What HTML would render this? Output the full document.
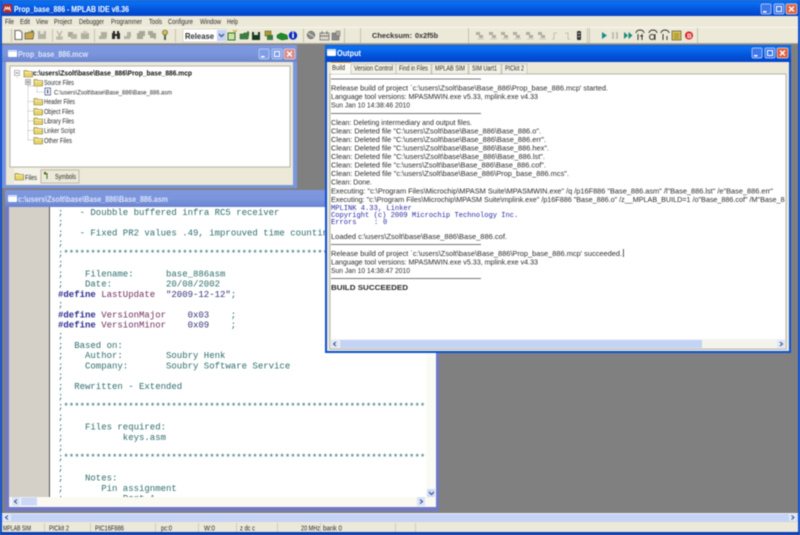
<!DOCTYPE html>
<html><head><meta charset="utf-8"><title>Prop_base_886 - MPLAB IDE v8.36</title>
<style>
html,body{margin:0;padding:0;background:#808080;overflow:hidden}
svg{display:block;filter:blur(.4px)}
.s{font-family:"Liberation Sans",sans-serif;font-size:7.5px;fill:#2c2c2c}
.m{font-family:"Liberation Mono",monospace;font-size:9px;fill:#2f6c6c}
.d{fill:#2b2b90;font-weight:bold}
.p{fill:#70305f}
.q{fill:#33337a}
.l{font-family:"Liberation Mono",monospace;font-size:7.1px;fill:#2a2aa5}
.t{font-family:"Liberation Sans",sans-serif;font-weight:bold;font-size:8px;fill:#fff}
</style></head><body>
<svg xmlns="http://www.w3.org/2000/svg" width="800" height="535" viewBox="0 0 800 535">
<defs>
<linearGradient id="act" x1="0" y1="0" x2="0" y2="1"><stop offset="0" stop-color="#0b62e6"/><stop offset=".15" stop-color="#0a70f2"/><stop offset=".6" stop-color="#0454dc"/><stop offset="1" stop-color="#0345c8"/></linearGradient>
<linearGradient id="ina" x1="0" y1="0" x2="0" y2="1"><stop offset="0" stop-color="#7d97e0"/><stop offset=".5" stop-color="#7c96de"/><stop offset="1" stop-color="#6c84cf"/></linearGradient>
<g id="bb"><rect x="0" y="0" width="10" height="10" rx="1.5" fill="#3d77ea" stroke="#d0dcf8" stroke-width=".7"/><rect x="2" y="7" width="3.5" height="1.5" fill="#fff"/></g>
<g id="bm"><rect x="0" y="0" width="10" height="10" rx="1.5" fill="#3d77ea" stroke="#d0dcf8" stroke-width=".7"/><rect x="2.5" y="2.5" width="5" height="5" fill="none" stroke="#fff"/></g>
<g id="bx"><rect x="0" y="0" width="11" height="10" rx="1.5" fill="#e0603c" stroke="#f4d8d0" stroke-width=".7"/><path d="M3 2.5L8 7.5M8 2.5L3 7.5" stroke="#fff" stroke-width="1.4"/></g>
<g id="bmi"><rect x="0" y="0" width="10" height="10" rx="1.5" fill="#7f9ee8" stroke="#c8d4f0" stroke-width=".7"/><rect x="2" y="7" width="3.5" height="1.5" fill="#fff"/></g>
<g id="bma"><rect x="0" y="0" width="10" height="10" rx="1.5" fill="#7f9ee8" stroke="#c8d4f0" stroke-width=".7"/><rect x="2.5" y="2.5" width="5" height="5" fill="none" stroke="#fff"/></g>
<g id="bxi"><rect x="0" y="0" width="11" height="10" rx="1.5" fill="#d98a8a" stroke="#ecd8d8" stroke-width=".7"/><path d="M3 2.5L8 7.5M8 2.5L3 7.5" stroke="#fff" stroke-width="1.4"/></g>
<g id="win"><rect x="0" y="0" width="9" height="7" rx="1" fill="#fff"/><rect x="0" y="0" width="9" height="2" fill="#cfdcf5"/></g>
<g id="fo"><path d="M0 1.5h3l1 1h4.500v5.500h-8.500z" fill="#e6d468" stroke="#7a7030" stroke-width=".6"/><rect x=".5" y="3" width="7.500" height="1" fill="#fbf3b8"/></g>
<g id="dis"><path d="M0 0h4v3h-4zM3 3h4v3h-4z" fill="#b0ae9f"/><rect x="1" y="6.5" width="7" height="1" fill="#cdcbbc"/></g>
<clipPath id="ed"><rect x="50" y="207" width="376" height="290"/></clipPath>
<clipPath id="ou"><rect x="330" y="75" width="455" height="264"/></clipPath>
</defs>

<rect width="800" height="535" fill="#808080"/>
<!-- main frame -->
<rect x="0" y="0" width="800" height="16" fill="url(#act)"/>
<rect x="0" y="0" width="2" height="535" fill="#0a50d8"/>
<rect x="798" y="0" width="2" height="535" fill="#0a50d8"/>
<rect x="0" y="532" width="800" height="3" fill="#0a3fb8"/>
<rect x="3" y="4" width="9" height="9" fill="#b02828"/><path d="M4 11l1.500-4 1 2.500 1-2.500 1 2.500 1-2.500 1 4" stroke="#fff" fill="none" stroke-width=".8"/>
<text class="t" x="14" y="12" textLength="115" lengthAdjust="spacingAndGlyphs" style="font-size:8.500px">Prop_base_886 - MPLAB IDE v8.36</text>
<use href="#bb" x="761" y="4"/><use href="#bm" x="774" y="4"/><use href="#bx" x="786" y="4"/>

<rect x="2" y="16" width="796" height="28" fill="#ece9d8"/>
<rect x="2" y="27" width="796" height="1" fill="#f8f6ea"/>
<rect x="2" y="43" width="796" height="1" fill="#aca899"/>
<g class="s">
<text x="5" y="24" textLength="9" lengthAdjust="spacingAndGlyphs">File</text>
<text x="20" y="24" textLength="10" lengthAdjust="spacingAndGlyphs">Edit</text>
<text x="36" y="24" textLength="12" lengthAdjust="spacingAndGlyphs">View</text>
<text x="54" y="24" textLength="18" lengthAdjust="spacingAndGlyphs">Project</text>
<text x="79" y="24" textLength="25" lengthAdjust="spacingAndGlyphs">Debugger</text>
<text x="111" y="24" textLength="31" lengthAdjust="spacingAndGlyphs">Programmer</text>
<text x="149" y="24" textLength="13" lengthAdjust="spacingAndGlyphs">Tools</text>
<text x="168" y="24" textLength="25" lengthAdjust="spacingAndGlyphs">Configure</text>
<text x="200" y="24" textLength="21" lengthAdjust="spacingAndGlyphs">Window</text>
<text x="227" y="24" textLength="11" lengthAdjust="spacingAndGlyphs">Help</text>
</g>
<!-- toolbar separators -->
<g fill="#c4c1b0">
<rect x="11" y="29" width="1" height="13"/><rect x="52" y="29" width="1" height="13"/><rect x="94" y="29" width="1" height="13"/><rect x="175" y="29" width="1" height="13"/><rect x="303" y="29" width="1" height="13"/><rect x="344" y="28" width="1" height="15"/><rect x="360" y="28" width="1" height="15"/><rect x="468" y="28" width="1" height="15"/><rect x="587" y="28" width="1" height="15"/><rect x="589" y="28" width="1" height="15"/><rect x="697" y="28" width="1" height="15"/>
</g>
<!-- toolbar icons group 1 -->
<path d="M15 30.500h5l2 2v7h-7z" fill="#fff" stroke="#444" stroke-width=".8"/>
<path d="M25 33h3l1-1h4l1 1-1 6h-8z" fill="#c8a848" stroke="#555" stroke-width=".7"/><path d="M31 30l3 1-2 2z" fill="#3a7a3a"/>
<rect x="38" y="31" width="8" height="8" fill="#b4b2a4"/><rect x="40" y="31" width="4" height="3" fill="#e4e2d4"/>
<path d="M57 31l3 5M62 31l-3 5" stroke="#aaa89a" stroke-width="1"/><circle cx="58" cy="38" r="1.300" fill="none" stroke="#aaa89a"/><circle cx="61" cy="38" r="1.300" fill="none" stroke="#aaa89a"/>
<rect x="68" y="32" width="5" height="5" fill="#a8a698"/><rect x="71" y="34" width="6" height="5" fill="#b8b6a8"/>
<rect x="81" y="33" width="8" height="6" fill="#b0ae9f"/><rect x="83" y="31" width="4" height="3" fill="#c8c6b8"/>
<path d="M99 36h8l-1 3h-7zM101 32h6v4h-6z" fill="#b0ae9f"/>
<path d="M112 33h3v6h-3zM117 33h3v6h-3zM113 31h2v2h-2zM117 31h2v2h-2zM115 34h2v2h-2z" fill="#2a2a2a"/>
<path d="M124 36h6v3h-6zM127 32h4v5h-4z" fill="#b4b2a4"/>
<path d="M137 33h6v6h-6zM139 31h6v5h-6z" fill="#a8a698"/>
<path d="M150 33h6v5h-6zM148 31h5v4h-5zM154 37h2v2h-2z" fill="#a8a698"/>
<circle cx="165" cy="32.500" r="2.500" fill="#d8c040" stroke="#555" stroke-width=".6"/><rect x="164" y="35" width="2" height="5" fill="#4a6a4a"/>
<!-- release combo -->
<rect x="183" y="29" width="43" height="13" fill="#fff" stroke="#c9c7b8" stroke-width=".6"/>
<text x="185" y="39" style="font:bold 8.500px 'Liberation Sans',sans-serif;fill:#333" textLength="29" lengthAdjust="spacingAndGlyphs">Release</text>
<rect x="217" y="30" width="8.500" height="11" fill="#c4d3f4"/><path d="M219 34l2.500 2.500 2.500-2.500" stroke="#304880" fill="none" stroke-width="1.200"/>
<!-- colored icons -->
<rect x="228" y="33" width="7" height="7" fill="#cfe0a0" stroke="#2a7030"/><path d="M233 30l2 2 2-2" stroke="#c8a820" fill="none"/>
<path d="M240 34h3l1-1h3l1-2 1 2-1 6h-8z" fill="#3a8040" stroke="#245028" stroke-width=".5"/>
<rect x="252" y="32" width="8" height="8" fill="#1a3a20"/><rect x="254" y="32" width="4" height="3" fill="#d8e4d0"/>
<rect x="265" y="31" width="6" height="5" fill="#b49830" stroke="#445018" stroke-width=".5"/><rect x="267" y="35" width="6" height="5" fill="#3a7a40"/>
<path d="M277 35l4-2 6 2 1 4-6 1-5-2z" fill="#1e8a2c" stroke="#185a20" stroke-width=".5"/>
<circle cx="293" cy="35.500" r="4.200" fill="#0a2cc0"/><rect x="292.200" y="33.500" width="1.600" height="4.500" fill="#fff"/><rect x="292.200" y="31.700" width="1.600" height="1.200" fill="#fff"/>
<circle cx="311" cy="35" r="3.800" fill="#8a8a88" stroke="#444" stroke-width=".5"/><path d="M308 33l6 4" stroke="#ddd" stroke-width=".8"/>
<rect x="320" y="33" width="9" height="7" fill="#d8d6c8" stroke="#555" stroke-width=".6"/><path d="M322 31v3M327 31v3M320 36h9" stroke="#555" stroke-width=".7"/>
<rect x="332" y="33" width="7" height="7" fill="#8a8a88" stroke="#555" stroke-width=".5"/><rect x="336" y="31" width="4" height="5" fill="#b0aea0" stroke="#555" stroke-width=".4"/>
<!-- checksum -->
<text x="372" y="38" style="font:bold 7.500px 'Liberation Sans',sans-serif;fill:#333" textLength="40" lengthAdjust="spacingAndGlyphs">Checksum:</text>
<text x="415" y="38" style="font:bold 7.500px 'Liberation Sans',sans-serif;fill:#333" textLength="23" lengthAdjust="spacingAndGlyphs">0x2f5b</text>
<!-- disabled group -->
<use href="#dis" x="476" y="32"/><use href="#dis" x="489" y="32"/><use href="#dis" x="501" y="32"/><use href="#dis" x="513" y="32"/><use href="#dis" x="526" y="32"/><use href="#dis" x="538" y="32"/>
<path d="M552 39h2v-6h3M565 33h3v6h2" stroke="#c4c2b4" fill="none"/>
<rect x="577" y="31" width="4" height="9" rx="1" fill="#333"/><rect x="578" y="33" width="2" height="1" fill="#ccc"/><rect x="578" y="36" width="2" height="1" fill="#ccc"/>
<!-- debug group -->
<path d="M602 32l5 3.500-5 3.500z" fill="#1a8a8a"/>
<rect x="612" y="32" width="2" height="7" fill="#bebcae"/><rect x="616" y="32" width="2" height="7" fill="#bebcae"/>
<path d="M624 32l4 3.500-4 3.500zM628.500 32l4 3.500-4 3.500z" fill="#1a8a7a"/>
<path d="M636 33a4 3 0 0 1 8 0" stroke="#333" fill="none"/><path d="M638 40v-6M642 40v-6M640 36h3" stroke="#333" fill="none"/>
<path d="M649 33a4 3 0 0 1 8 0" stroke="#333" fill="none"/><circle cx="652" cy="37" r="2.500" fill="none" stroke="#333"/><path d="M655 34v6" stroke="#333"/>
<path d="M661 33a4 3 0 0 1 8 0" stroke="#333" fill="none"/><path d="M663 34v6M667 36v4" stroke="#333" fill="none"/>
<rect x="672" y="31" width="9" height="9" fill="#d8c040" stroke="#444" stroke-width=".6"/><path d="M674 34h5M674 36h5M674 38h5" stroke="#555" stroke-width=".6"/>
<circle cx="689" cy="35.500" r="4" fill="#d82020"/><text x="687" y="38" style="font:bold 6.500px 'Liberation Sans',sans-serif;fill:#fff">B</text>

<!-- MDI horizontal scrollbar -->
<rect x="2" y="513" width="796" height="9" fill="#c5d4f6"/>
<rect x="2" y="513" width="796" height="1" fill="#e8ecf8"/>
<rect x="3" y="514" width="8" height="7" fill="#dfe6f8"/><path d="M8 515.500l-2.500 2 2.500 2" stroke="#304880" fill="none"/>
<rect x="789" y="514" width="8" height="7" fill="#dfe6f8"/><path d="M791.500 515.500l2.500 2-2.500 2" stroke="#304880" fill="none"/>
<!-- status bar -->
<rect x="2" y="522" width="796" height="10" fill="#ece9d8"/>
<g fill="#cfccba">
<rect x="44" y="523" width="1" height="9"/><rect x="90" y="523" width="1" height="9"/><rect x="155" y="523" width="1" height="9"/><rect x="198" y="523" width="1" height="9"/><rect x="236" y="523" width="1" height="9"/><rect x="277" y="523" width="1" height="9"/><rect x="320" y="523" width="1" height="9"/><rect x="395" y="523" width="1" height="9"/><rect x="415" y="523" width="1" height="9"/>
</g>
<g class="s" style="font-size:7px">
<text x="3" y="530.500" textLength="28" lengthAdjust="spacingAndGlyphs">MPLAB SIM</text>
<text x="49" y="530.500" textLength="20" lengthAdjust="spacingAndGlyphs">PICkit 2</text>
<text x="95" y="530.500" textLength="29" lengthAdjust="spacingAndGlyphs">PIC16F886</text>
<text x="161" y="530.500" textLength="11" lengthAdjust="spacingAndGlyphs">pc:0</text>
<text x="204" y="530.500" textLength="11" lengthAdjust="spacingAndGlyphs">W:0</text>
<text x="240" y="530.500" textLength="15" lengthAdjust="spacingAndGlyphs">z dc c</text>
<text x="301" y="530.500" textLength="19" lengthAdjust="spacingAndGlyphs">20 MHz</text>
<text x="323" y="530.500" textLength="19" lengthAdjust="spacingAndGlyphs">bank 0</text>
</g>

<!-- Workspace window -->
<rect x="2" y="45" width="295" height="143" fill="#7c96de"/>
<rect x="2" y="45" width="295" height="17" fill="url(#ina)"/>
<use href="#win" x="8" y="50"/>
<text class="t" x="18" y="57" textLength="70" lengthAdjust="spacingAndGlyphs" style="fill:#dbe4f8">Prop_base_886.mcw</text>
<use href="#bmi" x="259" y="49"/><use href="#bma" x="272" y="49"/><use href="#bxi" x="284" y="49"/>
<rect x="6" y="62" width="287" height="123" fill="#ece9d8"/>
<rect x="10" y="66" width="280" height="101" fill="#fff" stroke="#a8a698" stroke-width=".8"/>
<rect x="14" y="168" width="26" height="16" fill="#f5f3e8"/>
<rect x="41" y="170" width="38" height="13" fill="#ece9d8" stroke="#aca899" stroke-width=".7"/>
<use href="#fo" x="15" y="172"/>
<text class="s" x="25" y="180" textLength="12" lengthAdjust="spacingAndGlyphs">Files</text>
<path d="M44 174h3M47 173v6" stroke="#2a7a2a"/><rect x="44" y="172" width="2" height="2" fill="#8a4a20"/>
<text class="s" x="55" y="179" textLength="21" lengthAdjust="spacingAndGlyphs">Symbols</text>
<!-- tree -->
<path d="M17 77V78M28 79V140M28 86h6M28 101.500h6M28 111h6M28 121h6M28 130.500h6M28 140h6M37 87V92M37 92h7" stroke="#a0a098" stroke-width=".7" stroke-dasharray="1 1" fill="none"/>
<rect x="14.500" y="70.500" width="5" height="5" fill="#fff" stroke="#8a8a8a" stroke-width=".6"/><path d="M15.500 73h3" stroke="#333" stroke-width=".6"/>
<rect x="25.500" y="79.500" width="5" height="5" fill="#ddd" stroke="#8a8a8a" stroke-width=".6"/><path d="M26.500 82h3" stroke="#333" stroke-width=".6"/>
<use href="#fo" x="24" y="69"/>
<text x="33" y="75.500" style="font:bold 7px 'Liberation Sans',sans-serif;fill:#111" textLength="159" lengthAdjust="spacingAndGlyphs">c:\users\Zsolt\base\Base_886\Prop_base_886.mcp</text>
<use href="#fo" x="34" y="78"/><text class="s" x="44" y="85" textLength="30" lengthAdjust="spacingAndGlyphs">Source Files</text>
<rect x="45" y="88" width="5.500" height="7" fill="#fff" stroke="#334488" stroke-width=".7"/><path d="M47.700 89.500v4" stroke="#223"/>
<text class="s" x="54" y="94.500" textLength="118" lengthAdjust="spacingAndGlyphs" style="font-size:6.500px">C:\users\Zsolt\base\Base_886\Base_886.asm</text>
<use href="#fo" x="34" y="97"/><text class="s" x="44" y="104" textLength="31" lengthAdjust="spacingAndGlyphs">Header Files</text>
<use href="#fo" x="34" y="107"/><text class="s" x="44" y="114" textLength="30" lengthAdjust="spacingAndGlyphs">Object Files</text>
<use href="#fo" x="34" y="116.500"/><text class="s" x="44" y="123.500" textLength="30" lengthAdjust="spacingAndGlyphs">Library Files</text>
<use href="#fo" x="34" y="126"/><text class="s" x="44" y="133" textLength="31" lengthAdjust="spacingAndGlyphs">Linker Script</text>
<use href="#fo" x="34" y="136"/><text class="s" x="44" y="143" textLength="28" lengthAdjust="spacingAndGlyphs">Other Files</text>

<!-- Editor window -->
<rect x="5" y="190" width="434" height="321" fill="#7079c8"/>
<rect x="5" y="190" width="434" height="17" fill="url(#ina)"/>
<use href="#win" x="8" y="195"/>
<text class="t" x="18" y="202" textLength="150" lengthAdjust="spacingAndGlyphs" style="fill:#dbe4f8">c:\users\Zsolt\base\Base_886\Base_886.asm</text>
<rect x="9" y="207" width="426" height="300" fill="#ece9d8"/>
<rect x="9" y="207" width="40" height="290" fill="#d4d0c8"/>
<rect x="49" y="207" width="1" height="290" fill="#555"/>
<rect x="50" y="207" width="376" height="290" fill="#fff"/>
<rect x="426" y="207" width="10" height="290" fill="#fbfbf6"/>
<rect x="427" y="489" width="8" height="8" fill="#cfdbf6"/><path d="M429 492l2.500 2.500 2.500-2.500" stroke="#304880" fill="none"/>
<rect x="10" y="497" width="426" height="10" fill="#fbfaf2"/>
<rect x="12" y="497" width="8" height="9" fill="#d8e2f8"/><path d="M17 499.500l-2.500 2 2.500 2" stroke="#304880" fill="none"/>
<rect x="21" y="497.500" width="16" height="8" fill="#cbd9f6"/>
<rect x="417" y="497" width="8" height="9" fill="#d8e2f8"/><path d="M420 499.500l2.500 2-2.500 2" stroke="#304880" fill="none"/>
<g clip-path="url(#ed)" class="m">
<text y="215"><tspan x="58">;</tspan><tspan x="79.600">- Doubble buffered infra RC5 receiver</tspan></text>
<text x="58" y="225">;</text>
<text y="235.500"><tspan x="58">;</tspan><tspan x="79.600">- Fixed PR2 values .49, improuved time counting</tspan></text>
<text x="58" y="245.500">;</text>
<text x="58" y="256">;*****************************************************************************</text>
<text x="58" y="266">;</text>
<text y="276.500"><tspan x="58">;</tspan><tspan x="85">Filename:</tspan><tspan x="166">base_886asm</tspan></text>
<text y="286.500"><tspan x="58">;</tspan><tspan x="85">Date:</tspan><tspan x="166">20/08/2002</tspan></text>
<text y="297"><tspan x="58" class="d">#define</tspan><tspan x="101.200" class="p">LastUpdate</tspan><tspan x="166" class="q">"2009-12-12"</tspan><tspan>;</tspan></text>
<text x="58" y="307">;</text>
<text y="317.500"><tspan x="58" class="d">#define</tspan><tspan x="101.200" class="p">VersionMajor</tspan><tspan x="187.600" class="q">0x03</tspan><tspan x="230.800">;</tspan></text>
<text y="327.500"><tspan x="58" class="d">#define</tspan><tspan x="101.200" class="p">VersionMinor</tspan><tspan x="187.600" class="q">0x09</tspan><tspan x="230.800">;</tspan></text>
<text x="58" y="338">;</text>
<text y="348"><tspan x="58">;</tspan><tspan x="74.200">Based on:</tspan></text>
<text y="358"><tspan x="58">;</tspan><tspan x="85">Author:</tspan><tspan x="166">Soubry Henk</tspan></text>
<text y="368.500"><tspan x="58">;</tspan><tspan x="85">Company:</tspan><tspan x="166">Soubry Software Service</tspan></text>
<text x="58" y="378.500">;</text>
<text y="389"><tspan x="58">;</tspan><tspan x="74.200">Rewritten - Extended</tspan></text>
<text x="58" y="399">;</text>
<text x="58" y="409">;*****************************************************************************</text>
<text x="58" y="419.500">;</text>
<text y="429.500"><tspan x="58">;</tspan><tspan x="85">Files required:</tspan></text>
<text y="440"><tspan x="58">;</tspan><tspan x="122.800">keys.asm</tspan></text>
<text x="58" y="450">;</text>
<text x="58" y="460">;*****************************************************************************</text>
<text x="58" y="470.500">;</text>
<text y="480.500"><tspan x="58">;</tspan><tspan x="85">Notes:</tspan></text>
<text y="491"><tspan x="58">;</tspan><tspan x="101.200">Pin assignment</tspan></text>
<text y="501"><tspan x="58">;</tspan><tspan x="122.800">Port A</tspan></text>
</g>

<!-- Output window -->
<rect x="325" y="45" width="466" height="308" fill="#0a50d8"/>
<rect x="325" y="45" width="466" height="17" fill="url(#act)"/>
<use href="#win" x="327" y="49"/>
<text class="t" x="337" y="56" textLength="24" lengthAdjust="spacingAndGlyphs">Output</text>
<use href="#bb" x="752" y="48"/><use href="#bm" x="765" y="48"/><use href="#bx" x="777" y="48"/>
<rect x="327" y="62" width="462" height="289" fill="#ece9d8"/>
<rect x="330" y="74" width="456" height="275" fill="#fff" stroke="#9c9a8c" stroke-width=".7"/>
<!-- tabs -->
<rect x="331" y="62" width="20" height="12" fill="#fbfaf2"/><rect x="331" y="62" width="20" height="1" fill="#e8a030"/>
<g fill="#f2f0e4" stroke="#aca899" stroke-width=".5">
<rect x="351" y="64" width="45" height="10"/><rect x="396" y="64" width="35" height="10"/><rect x="432" y="64" width="36" height="10"/><rect x="469" y="64" width="32" height="10"/><rect x="502" y="64" width="25" height="10"/>
</g>
<g class="s" style="font-size:7px">
<text x="332" y="70" textLength="13" lengthAdjust="spacingAndGlyphs">Build</text>
<text x="354" y="70.500" textLength="39" lengthAdjust="spacingAndGlyphs">Version Control</text>
<text x="399" y="70.500" textLength="29" lengthAdjust="spacingAndGlyphs">Find in Files</text>
<text x="435" y="70.500" textLength="30" lengthAdjust="spacingAndGlyphs">MPLAB SIM</text>
<text x="472" y="70.500" textLength="25" lengthAdjust="spacingAndGlyphs">SIM Uart1</text>
<text x="505" y="70.500" textLength="19" lengthAdjust="spacingAndGlyphs">PICkit 2</text>
</g>
<g clip-path="url(#ou)">
<g fill="#777"><rect x="331" y="78.500" width="150" height="1"/><rect x="331" y="113" width="150" height="1"/><rect x="331" y="244" width="150" height="1"/><rect x="331" y="278" width="150" height="1"/></g>
<g class="s">
<text x="331" y="90.500" textLength="277" lengthAdjust="spacingAndGlyphs">Release build of project `c:\users\Zsolt\base\Base_886\Prop_base_886.mcp' started.</text>
<text x="331" y="99" textLength="207" lengthAdjust="spacingAndGlyphs">Language tool versions: MPASMWIN.exe v5.33, mplink.exe v4.33</text>
<text x="331" y="107.500" textLength="79" lengthAdjust="spacingAndGlyphs">Sun Jan 10 14:38:46 2010</text>
<text x="331" y="125" textLength="141" lengthAdjust="spacingAndGlyphs">Clean: Deleting intermediary and output files.</text>
<text x="331" y="133.500" textLength="210" lengthAdjust="spacingAndGlyphs">Clean: Deleted file "C:\users\Zsolt\base\Base_886\Base_886.o".</text>
<text x="331" y="142" textLength="215" lengthAdjust="spacingAndGlyphs">Clean: Deleted file "C:\users\Zsolt\base\Base_886\Base_886.err".</text>
<text x="331" y="150.500" textLength="218" lengthAdjust="spacingAndGlyphs">Clean: Deleted file "C:\users\Zsolt\base\Base_886\Base_886.hex".</text>
<text x="331" y="159" textLength="214" lengthAdjust="spacingAndGlyphs">Clean: Deleted file "C:\users\Zsolt\base\Base_886\Base_886.lst".</text>
<text x="331" y="167.500" textLength="215" lengthAdjust="spacingAndGlyphs">Clean: Deleted file "c:\users\Zsolt\base\Base_886\Base_886.cof".</text>
<text x="331" y="176" textLength="238" lengthAdjust="spacingAndGlyphs">Clean: Deleted file "c:\users\Zsolt\base\Base_886\Prop_base_886.mcs".</text>
<text x="331" y="184.500" textLength="41" lengthAdjust="spacingAndGlyphs">Clean: Done.</text>
<text x="331" y="193.500" textLength="442" lengthAdjust="spacingAndGlyphs">Executing: "c:\Program Files\Microchip\MPASM Suite\MPASMWIN.exe" /q /p16F886 "Base_886.asm" /l"Base_886.lst" /e"Base_886.err"</text>
<text x="331" y="202" textLength="480" lengthAdjust="spacingAndGlyphs">Executing: "c:\Program Files\Microchip\MPASM Suite\mplink.exe" /p16F886 "Base_886.o" /z__MPLAB_BUILD=1 /o"Base_886.cof" /M"Base_886.map"</text>
<text x="331" y="239" textLength="176" lengthAdjust="spacingAndGlyphs">Loaded c:\users\Zsolt\base\Base_886\Base_886.cof.</text>
<text x="331" y="256" textLength="291" lengthAdjust="spacingAndGlyphs">Release build of project `c:\users\Zsolt\base\Base_886\Prop_base_886.mcp' succeeded.</text>
<text x="331" y="264.500" textLength="207" lengthAdjust="spacingAndGlyphs">Language tool versions: MPASMWIN.exe v5.33, mplink.exe v4.33</text>
<text x="331" y="273" textLength="79" lengthAdjust="spacingAndGlyphs">Sun Jan 10 14:38:47 2010</text>
<text x="331" y="290" textLength="77" lengthAdjust="spacingAndGlyphs" style="font-weight:bold">BUILD SUCCEEDED</text>
</g>
<text class="l" y="210"><tspan x="331">MPLINK 4.33, Linker</tspan></text>
<text class="l" x="331" y="217">Copyright (c) 2009 Microchip Technology Inc.</text>
<text class="l" y="224"><tspan x="331">Errors</tspan><tspan x="374">:</tspan><tspan x="383">0</tspan></text>
<rect x="623" y="249" width=".8" height="8" fill="#333"/>
</g>
<!-- output hscroll -->
<rect x="331" y="339" width="454" height="9.500" fill="#f4f4ee"/>
<rect x="331" y="340" width="8" height="8" fill="#dfe6f8"/><path d="M336 342l-2.500 2 2.500 2" stroke="#304880" fill="none"/>
<rect x="340" y="340" width="362" height="8" fill="#c2d3f6"/>
<rect x="777" y="340" width="8" height="8" fill="#dfe6f8"/><path d="M780 342l2.500 2-2.500 2" stroke="#304880" fill="none"/>
</svg>
</body></html>
